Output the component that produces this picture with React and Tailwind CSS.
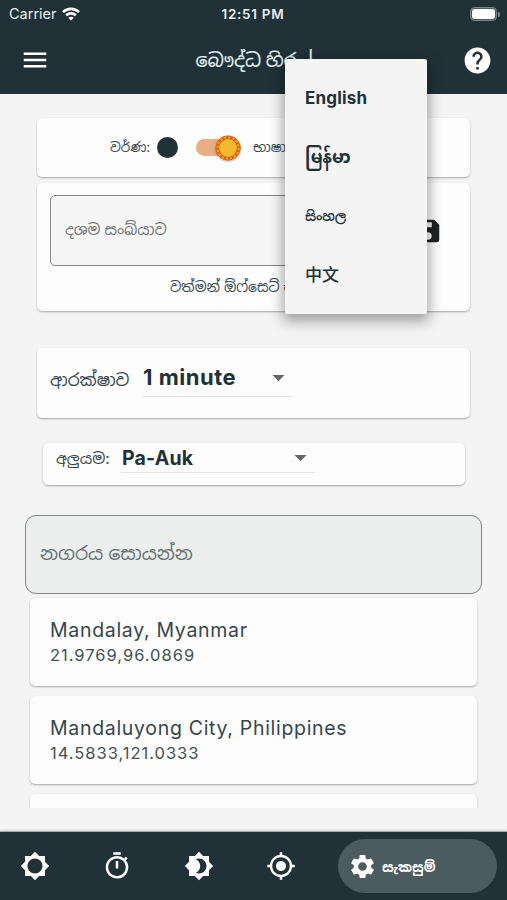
import {
  MdMenu, MdHelp, MdBrightness5, MdOutlineTimer, MdBrightness4,
  MdGpsFixed, MdSettings, MdSave, MdArrowDropDown,
} from "react-icons/md";

const card = "bg-[#fdfdfd] rounded-[5px] shadow-[0_1px_2px_rgba(0,0,0,0.32)]";

function StatusBar() {
  return (
    <div className="flex h-[28px] items-center justify-between pl-[9px] pr-[7px] text-[#e9eded]">
      <div className="flex w-[177px] items-center gap-[6px] text-[14.5px]">
        <span className="w-[47px] whitespace-nowrap">Carrier</span>
        <svg width="18" height="14" viewBox="0 0 18 14" fill="none" stroke="#fff" strokeWidth="2.6">
          <path d="M1 5.1C5.4.8 12.6.8 17 5.1" />
          <path d="M4.1 8.3c2.8-2.6 7-2.6 9.8 0" />
          <path d="M9 13.6 6.2 10.8c1.6-1.4 4-1.4 5.6 0Z" fill="#fff" stroke="none" />
        </svg>
      </div>
      <span className="text-[13.5px] font-semibold tracking-[0.7px]">12:51 PM</span>
      <div className="flex w-[180px] items-center justify-end gap-px">
        <div className="h-[14px] w-[27px] rounded-[4.5px] border border-[#7c888b] bg-[#4b595d] p-px">
          <div className="h-full rounded-[3px] bg-white" />
        </div>
        <div className="h-[5px] w-[2px] rounded-r bg-[#7c888b]" />
      </div>
    </div>
  );
}

function Sun() {
  return (
    <svg width="26" height="26" viewBox="0 0 26 26" className="drop-shadow-[0_1px_1px_rgba(0,0,0,0.3)]">
      <circle cx="13" cy="13" r="12.5" fill="#d9680f" />
      <circle cx="13" cy="13" r="10.6" fill="none" stroke="#f0a52a" strokeWidth="2" strokeDasharray="1.9 2.262" />
      <circle cx="13" cy="13" r="8.7" fill="#f2b92e" />
    </svg>
  );
}

function City({ name, coords }) {
  return (
    <div className={`${card} h-[88px] shrink-0 px-[20px] pt-[19px] text-[#36464a]`}>
      <div className="text-[19.5px] leading-[26px] tracking-[0.69px]">{name}</div>
      <div className="text-[16.5px] leading-[25px] tracking-[0.98px] text-[#435155]">{coords}</div>
    </div>
  );
}

const languages = [
  { label: "English", style: "text-[17px] tracking-[0.2px] font-bold pt-px" },
  { label: "မြန်မာ", style: "text-[17px] font-bold" },
  { label: "සිංහල", style: "text-[13px] font-semibold tracking-[-0.2px]" },
  { label: "中文", style: "text-[17px] font-medium" },
];

export default function App() {
  return (
    <div className="relative flex h-[900px] w-[507px] flex-col overflow-hidden bg-[#f4f4f4] font-['Inter','Noto_Sans','Noto_Sans_Sinhala','Noto_Sans_Myanmar','Noto_Sans_CJK_SC',sans-serif] text-[#36464a]">
      <header className="h-[94px] shrink-0 bg-[#203238] text-white">
        <StatusBar />
        <div className="flex h-[64px] items-center justify-between pl-[20px] pr-[14px]">
          <MdMenu size={30} />
          <h1 className="w-[121px] whitespace-nowrap pt-[3px] text-[18.8px] font-medium tracking-[-0.2px] text-[#dfe8ea]">බෞද්ධ හිරු |</h1>
          <MdHelp size={31} />
        </div>
      </header>

      <main className="flex h-[714px] shrink-0 flex-col overflow-hidden pt-[24px]">
        <section className={`${card} mx-[37px] flex h-[59px] shrink-0 items-center pl-[73px]`}>
          <span className="w-[47px] whitespace-nowrap text-[13.4px]">වර්ණ:</span>
          <span className="h-[21px] w-[21px] rounded-full bg-[#203238]" />
          <span className="ml-[18px] flex h-[17px] w-[45px] items-center justify-end rounded-full bg-[#e9ae84]"><Sun /></span>
          <span className="ml-[12px] whitespace-nowrap text-[13.8px]">භාෂා</span>
        </section>

        <section className={`${card} mx-[37px] mt-[6px] h-[128px] shrink-0 px-[12px] pt-[12px]`}>
          <div className="flex items-center">
            <div className="ml-px flex h-[71px] w-[339px] items-center rounded-[5px] border-[1.5px] border-[#838686] bg-[#f5f5f5] pl-[14px] text-[15.1px] text-[#707575]">
              <span className="whitespace-nowrap">දශම සංඛ්යාව</span>
            </div>
            <MdSave size={30} className="ml-[24px] shrink-0 text-[#202123]" />
          </div>
          <div className="ml-[121px] mt-[9px] whitespace-nowrap text-[14px] leading-[24px]">වත්මන් ඕෆ්සෙට් එ</div>
        </section>

        <section className={`${card} mx-[37px] mt-[37px] flex h-[70px] shrink-0 items-start pl-[13px] pt-[12px]`}>
          <span className="w-[92px] whitespace-nowrap text-[17px] leading-[40px]">ආරක්ෂාව</span>
          <div className="flex h-[37px] w-[151px] items-center justify-between border-b border-[#e3e5e5] pb-[2px] pl-px text-[22px] font-bold text-[#203238]">
            <span className="tracking-[0.5px]">1 minute</span>
            <MdArrowDropDown size={29} className="text-[#666]" />
          </div>
        </section>

        <section className={`${card} ml-[43px] mr-[42px] mt-[25px] flex h-[42px] shrink-0 items-start pl-[13px]`}>
          <span className="w-[65px] whitespace-nowrap text-[15.3px] leading-[32px]">අලුයම:</span>
          <div className="flex h-[30px] w-[194px] items-center justify-between border-b border-[#e3e5e5] pl-px text-[19.5px] font-bold text-[#203238]">
            <span className="pt-[2px] tracking-[0.2px]">Pa-Auk</span>
            <MdArrowDropDown size={29} className="text-[#666]" />
          </div>
        </section>

        <div className="mx-[25px] mt-[30px] flex h-[79px] shrink-0 items-center rounded-[11px] border-[1.5px] border-[#838686] bg-[#ebeeed] pl-[14px] text-[18.7px] text-[#667071]">
          <span className="whitespace-nowrap">නගරය සොයන්න</span>
        </div>

        <div className="mx-[30px] mt-[4px] flex flex-col gap-[10px]">
          <City name="Mandalay, Myanmar" coords="21.9769,96.0869" />
          <City name="Mandaluyong City, Philippines" coords="14.5833,121.0333" />
          <City name="" coords="" />
        </div>
      </main>

      <nav className="mt-auto flex h-[69px] shrink-0 items-center border-t border-[#a7adaf] bg-[#203238] pl-[20px] text-white shadow-[0_-1px_2px_rgba(0,0,0,0.12)]">
        <MdBrightness5 size={30} />
        <MdOutlineTimer size={30} className="ml-[52px]" />
        <MdBrightness4 size={30} className="ml-[52px]" />
        <MdGpsFixed size={30} className="ml-[52px]" />
        <div className="ml-[42px] flex h-[54px] w-[159px] items-center rounded-full bg-[#4c5b60] pl-[10px]">
          <MdSettings size={29} />
          <span className="ml-[5px] whitespace-nowrap pt-[2px] text-[13.4px] font-bold">සැකසුම්</span>
        </div>
      </nav>

      <div className="absolute left-[285px] top-[59px] flex h-[255px] w-[142px] flex-col rounded-[2px] bg-[#f4f4f4] pl-[20px] pt-[10px] text-[#203238] shadow-[0_5px_14px_2px_rgba(0,0,0,0.36)]">
        {languages.map((l) => (
          <div key={l.label} className={`flex h-[59px] items-center whitespace-nowrap ${l.style}`}>{l.label}</div>
        ))}
      </div>
    </div>
  );
}
